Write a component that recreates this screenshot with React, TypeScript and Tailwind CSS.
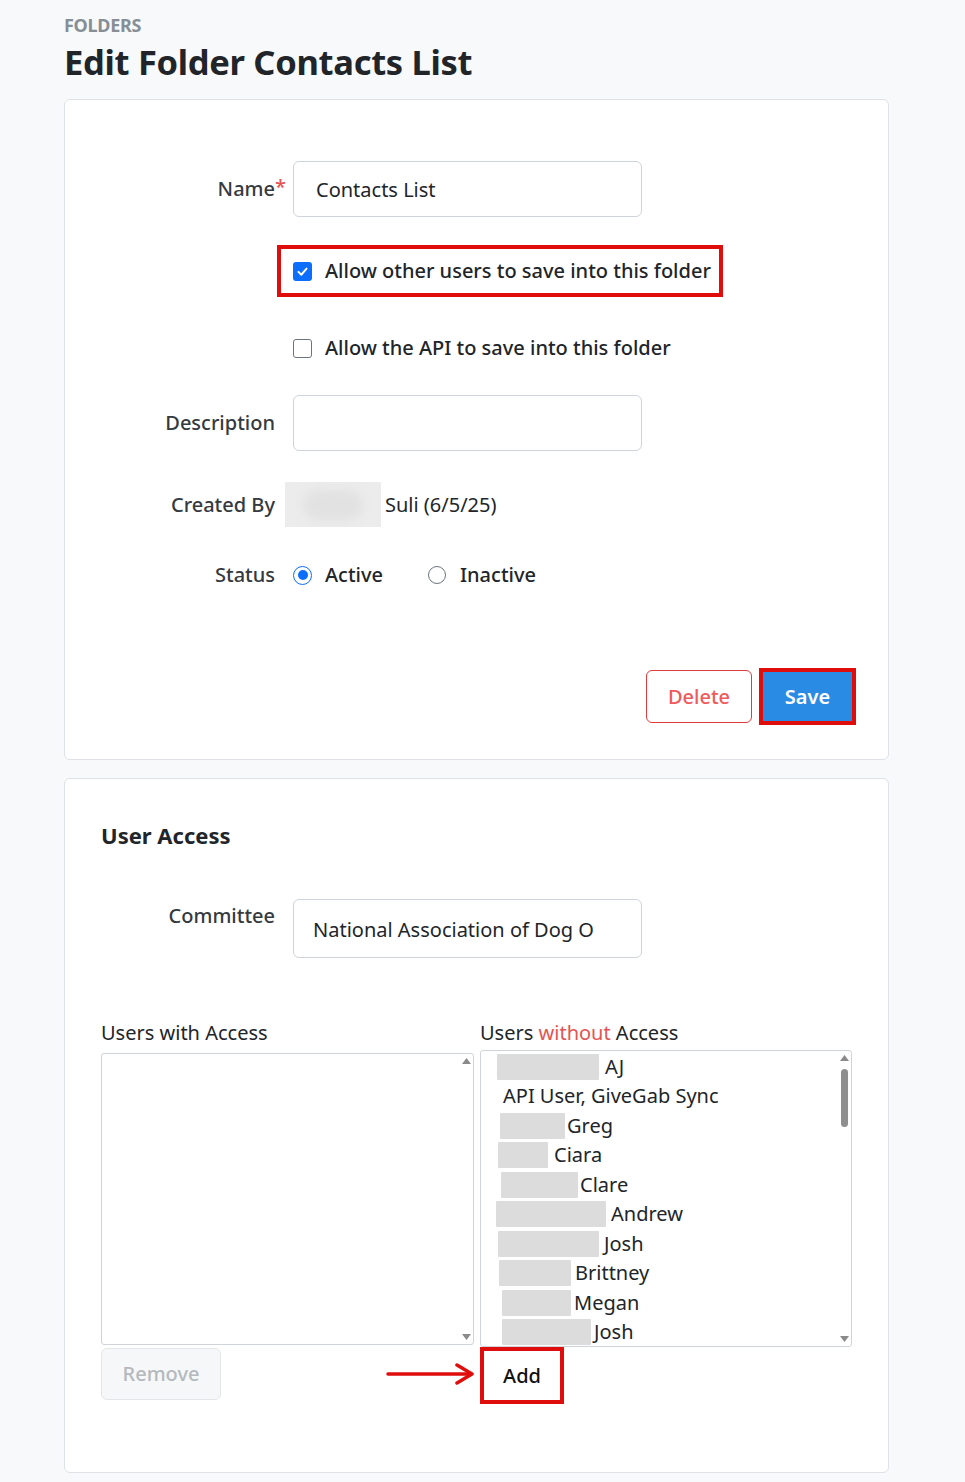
import React from 'react'

const users = [
  { pad: 16, blur: 102, gap: 6, name: 'AJ' },
  { pad: 22, blur: 0, gap: 0, name: 'API User, GiveGab Sync' },
  { pad: 19, blur: 65, gap: 2, name: 'Greg' },
  { pad: 17, blur: 50, gap: 6, name: 'Ciara' },
  { pad: 20, blur: 77, gap: 2, name: 'Clare' },
  { pad: 15, blur: 110, gap: 5, name: 'Andrew' },
  { pad: 17, blur: 101, gap: 5, name: 'Josh' },
  { pad: 18, blur: 72, gap: 4, name: 'Brittney' },
  { pad: 21, blur: 69, gap: 3, name: 'Megan' },
  { pad: 21, blur: 89, gap: 3, name: 'Josh' },
]

function ScrollArrows({ thumb }: { thumb?: boolean }) {
  return (
    <div className="absolute right-0 top-0 bottom-0 w-[14px] flex flex-col items-center justify-between py-[4px]">
      <svg width="9" height="6" viewBox="0 0 9 6">
        <path d="M4.5 0 L9 6 L0 6 Z" fill="#8a8a8a" />
      </svg>
      {thumb && <div className="absolute top-[18px] w-[7px] h-[58px] rounded-full bg-[#8f8f8f]" />}
      <svg width="9" height="6" viewBox="0 0 9 6">
        <path d="M0 0 L9 0 L4.5 6 Z" fill="#8a8a8a" />
      </svg>
    </div>
  )
}

export default function App() {
  return (
    <div className="min-h-[1482px] bg-[#f8f9fa] text-[#212529] font-['Noto_Sans',sans-serif] px-[64px] pt-[12px] pb-[10px]">
      <div className="text-[18px] font-bold text-[#868e96] leading-[26px] tracking-[-0.3px]">FOLDERS</div>
      <h1 className="text-[34.5px] font-bold leading-[46px] tracking-[-0.3px] mt-[1px]">Edit Folder Contacts List</h1>

      {/* Folder card */}
      <div className="mt-[14px] w-[825px] bg-white border border-[#dee2e6] rounded-[6px] pl-[36px] pr-[32px] pt-[61px] pb-[34px] text-[20px]">
        <div className="flex items-center h-[56px]">
          <div className="w-[174px] text-right font-medium text-[#343a40] relative">
            Name<span className="absolute left-[174px] top-[-2px] text-[#e55353]">*</span>
          </div>
          <input
            readOnly
            value="Contacts List"
            className="ml-[18px] w-[349px] h-[56px] border border-[#ced4da] rounded-[6px] px-[22px] text-[20px] text-[#212529] outline-none"
          />
        </div>

        <div className="mt-[28px] ml-[176px] w-[446px] h-[52px] border-[4px] border-[#e00d0d] flex items-center pl-[12px]">
          <span className="w-[19px] h-[19px] rounded-[3px] bg-[#0d6efd] flex items-center justify-center">
            <svg width="13" height="13" viewBox="0 0 16 16">
              <path d="M3 8.5 L6.5 12 L13 4.5" fill="none" stroke="white" strokeWidth="2.4" strokeLinecap="round" strokeLinejoin="round" />
            </svg>
          </span>
          <span className="ml-[13px] font-medium whitespace-nowrap">Allow other users to save into this folder</span>
        </div>

        <div className="mt-[37px] ml-[192px] flex items-center h-[28px]">
          <span className="w-[19px] h-[19px] rounded-[3px] border-[1.5px] border-[#6c757d] bg-white" />
          <span className="ml-[13px] font-medium whitespace-nowrap">Allow the API to save into this folder</span>
        </div>

        <div className="mt-[33px] flex items-center h-[56px]">
          <div className="w-[174px] text-right font-medium text-[#343a40]">Description</div>
          <div className="ml-[18px] w-[349px] h-[56px] border border-[#ced4da] rounded-[6px]" />
        </div>

        <div className="mt-[31px] flex items-center h-[45px]">
          <div className="w-[174px] text-right font-medium text-[#343a40]">Created By</div>
          <div className="ml-[10px] w-[96px] h-[45px] bg-[#ececec] flex items-center justify-center">
            <div className="w-[60px] h-[30px] bg-[#e2e2e2] blur-[4px] rounded-full" />
          </div>
          <span className="ml-[4px]">Suli (6/5/25)</span>
        </div>

        <div className="mt-[33px] flex items-center h-[30px]">
          <div className="w-[174px] text-right font-medium text-[#343a40]">Status</div>
          <span className="ml-[18px] w-[19px] h-[19px] rounded-full border-[1.5px] border-[#0d6efd] flex items-center justify-center">
            <span className="w-[10px] h-[10px] rounded-full bg-[#0d6efd]" />
          </span>
          <span className="ml-[13px] font-medium">Active</span>
          <span className="ml-[45px] w-[18px] h-[18px] rounded-full border-[1.5px] border-[#6c757d]" />
          <span className="ml-[14px] font-medium">Inactive</span>
        </div>

        <div className="mt-[78px] flex justify-end items-center gap-[7px]">
          <button className="w-[106px] h-[53px] border border-[#e03a3a] rounded-[6px] text-[#ef5a5a] font-medium">Delete</button>
          <div className="border-[4px] border-[#e00d0d] p-0">
            <button className="w-[89px] h-[49px] bg-[#2a8be4] text-white font-semibold">Save</button>
          </div>
        </div>
      </div>

      {/* User access card */}
      <div className="mt-[18px] w-[825px] bg-white border border-[#dee2e6] rounded-[6px] pl-[36px] pr-[36px] pt-[40px] pb-[68px] text-[20px]">
        <h2 className="text-[22px] font-bold leading-[32px]">User Access</h2>

        <div className="mt-[48px] flex items-start">
          <div className="w-[174px] text-right font-medium text-[#343a40] pt-[2px]">Committee</div>
          <div className="ml-[18px] w-[349px] h-[59px] border border-[#ced4da] rounded-[6px] px-[19px] flex items-center pt-[2px]">
            National Association of Dog O
          </div>
        </div>

        <div className="mt-[61px] flex gap-[6px]">
          <div className="w-[373px]">
            <div className="leading-[28px]">Users with Access</div>
            <div className="mt-[6px] relative h-[292px] border border-[#ced4da] rounded-[3px] bg-white">
              <ScrollArrows />
            </div>
            <button className="mt-[3px] w-[120px] h-[52px] bg-[#f6f7f8] border border-[#e3e6e9] rounded-[6px] text-[#b4b9be] font-medium">
              Remove
            </button>
          </div>

          <div className="w-[372px]">
            <div className="leading-[28px]">
              Users <span className="text-[#e55353]">without</span> Access
            </div>
            <div className="mt-[3px] relative h-[297px] border border-[#ced4da] rounded-[3px] bg-white pt-[1px] overflow-hidden">
              {users.map((u, i) => (
                <div key={i} className="flex items-center h-[29.5px] whitespace-nowrap" style={{ paddingLeft: u.pad }}>
                  {u.blur > 0 && <div className="h-[26px] bg-[#dcdcdc] rounded-[1px]" style={{ width: u.blur, marginRight: u.gap }} />}
                  <span>{u.name}</span>
                </div>
              ))}
              <ScrollArrows thumb />
            </div>
            <div className="relative">
              <svg className="absolute left-[-94px] top-[16px]" width="90" height="22" viewBox="0 0 90 22">
                <path d="M2 11 H84" stroke="#e00d0d" strokeWidth="3.5" strokeLinecap="round" />
                <path d="M71 2 L86 11 L71 20" fill="none" stroke="#e00d0d" strokeWidth="3.5" strokeLinecap="round" strokeLinejoin="round" />
              </svg>
              <div className="w-[84px] h-[57px] border-[4px] border-[#e00d0d] flex items-center justify-center font-medium text-[#111]">
                Add
              </div>
            </div>
          </div>
        </div>
      </div>
    </div>
  )
}
